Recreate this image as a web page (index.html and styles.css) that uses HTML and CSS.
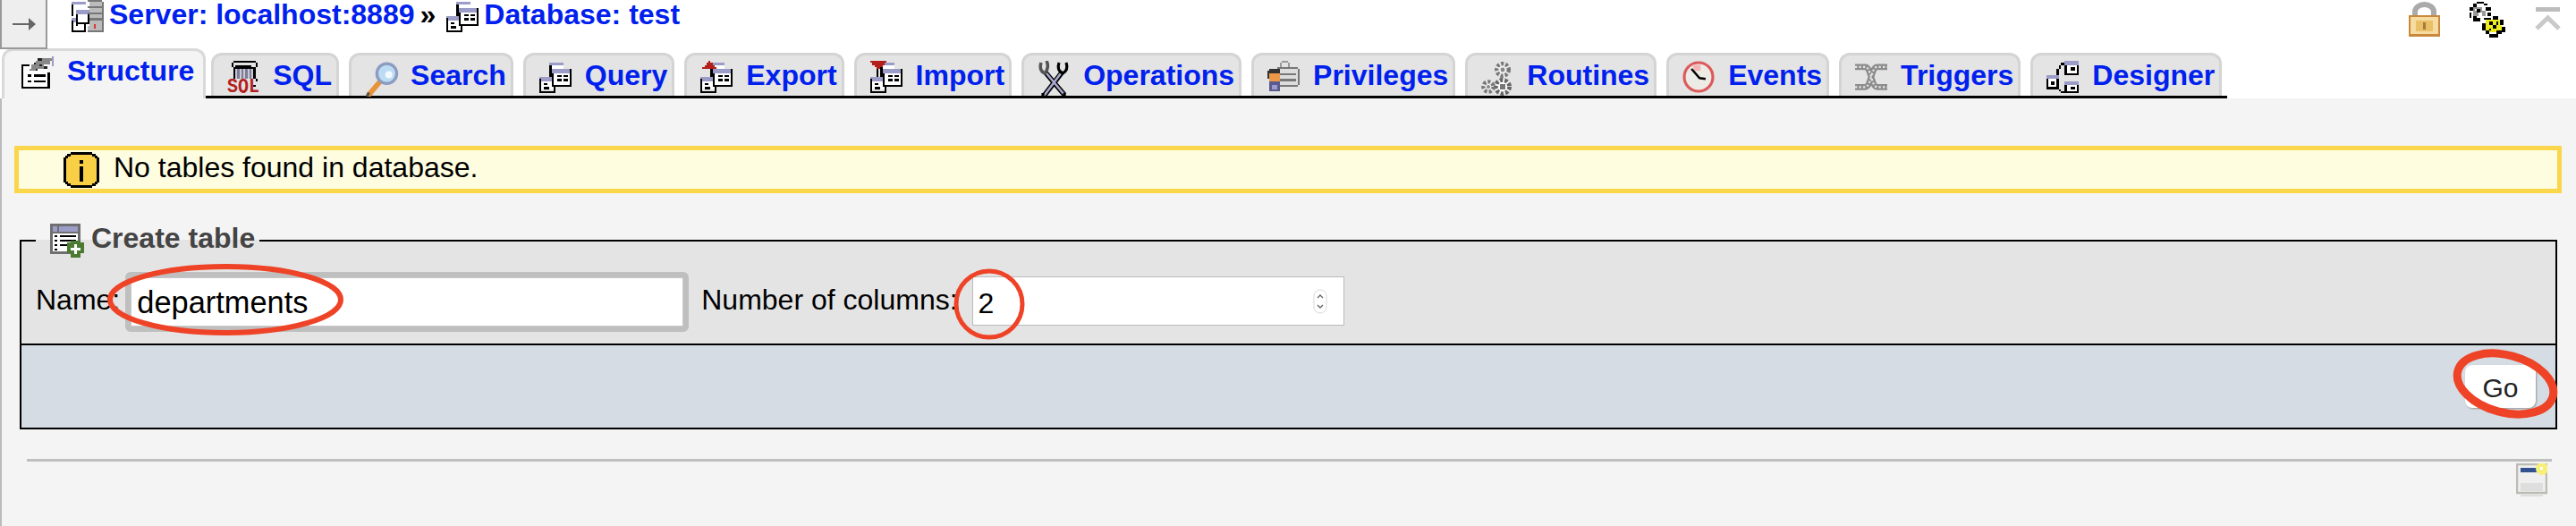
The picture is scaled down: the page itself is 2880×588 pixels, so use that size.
FILE: index.html
```html
<!DOCTYPE html>
<html lang="en">
<head>
	<meta charset="UTF-8">
	<title>localhost:8889 / test</title>
	<link rel="stylesheet" href="styles.css">
</head>
<body>
	<svg class="defs" width="0" height="0">
		<symbol id="i-sheets" viewBox="0 0 16 16" shape-rendering="crispEdges">
			<path fill="#9c9cc8" d="M5 1h7v1H5zM6 4h9v2H6zM0 8h6v2H0z"/>
			<path fill="#fff" d="M6 2h6v2H6zM7 6h8v6H7zM1 10h6v4H1z"/>
			<path fill="#000" d="M5 2h1v6H5zM6 6h1v7H6zM15 4h1v9h-1zM7 12h8v1H7zM9 7h2v1H9zM12 7h2v1h-2zM9 9h2v1H9zM12 9h2v1h-2zM0 9h1v7H0zM1 15h7v1H1zM7 13h1v2H7zM2 11h2v1H2zM2 13h3v1H2z"/>
		</symbol>
		<symbol id="i-server" viewBox="0 0 16 16" shape-rendering="crispEdges">
			<path fill="#9c9cc8" d="M0 1h7v1H0zM2 5h7v2H2zM0 9h3v2H0z"/>
			<path fill="#fff" d="M3 7h5v4H3zM1 11h6v4H1z"/>
			<path fill="#000" d="M0 2h1v6H0zM2 7h1v6H2zM8 7h1v5H8zM3 11h5v1H3zM0 10h1v6H0zM1 15h6v1H1zM6 12h1v4H6z"/>
			<path fill="#bbb" d="M9 1h6v2H9zM9 4h6v2H9zM9 7h6v2H9zM9 10h6v3H9zM8 13h7v2H8z"/>
			<path fill="#777" d="M8 0h7v1H8zM15 1h1v14h-1zM8 3h7v1H8zM8 6h7v1H8zM9 9h6v1H9zM8 15h8v1H8z"/>
			<path fill="#d33" d="M11 12h1v2h-1z"/>
		</symbol>
		<symbol id="i-structure" viewBox="0 0 16 16" shape-rendering="crispEdges">
			<path fill="#fff" d="M1 4h12v11H1z"/>
			<path fill="#000" d="M0 4h4v1H1v10h12V8h1v8H0zM3 9h2v1H3zM6 9h6v1H6zM3 12h2v1H3zM6 12h6v1H6z"/>
			<path fill="#888" d="M7 2h7v2H7zM5 4h6v2H5zM9 1h6v1H9zM4 6h4v1H4z"/>
			<path fill="#222" d="M8 1h2v1H8zM6 3h1v1H6zM9 4h1v1H9zM11 5h2v1h-2zM7 6h1v1H7z"/>
			<path fill="#9c9cc8" d="M15 0h1v5h-1z"/>
		</symbol>
		<symbol id="i-sql" viewBox="0 0 16 16" shape-rendering="crispEdges">
			<path fill="#000" d="M3 0h11v1H3zM2 1h1v2H2zM14 1h1v2h-1zM4 2h8v1H4zM3 3h11v1H3zM3 4h1v5H3zM13 4h1v5h-1zM14 9h1v1h-1zM13 12h1v1h-1z"/>
			<path fill="#c9c9d8" d="M4 4h9v5H4z"/>
			<path fill="#7d7d95" d="M5 4h1v5H5zM7 4h1v5H7zM9 4h1v5H9zM11 4h1v5h-1z"/>
		</symbol>
		<symbol id="i-search" viewBox="0 0 18 18">
			<path stroke="#e8923a" stroke-width="2.6" stroke-linecap="round" d="M2 17l6-7"/>
			<path stroke="#555" stroke-width="1.4" d="M1 18l1-2"/>
			<circle cx="11" cy="6.4" r="5" fill="#bcdcf4" stroke="#8c9cc0" stroke-width="1.5"/>
			<circle cx="12" cy="7" r="1.8" fill="#f2f8fd"/>
		</symbol>
		<symbol id="i-export" viewBox="0 0 16 16">
			<use href="#i-sheets"/>
			<path fill="#b3201c" shape-rendering="crispEdges" d="M4 0h1v1H4zM3 1h3v1H3zM2 2h5v1H2zM1 3h7v1H1z"/>
		</symbol>
		<symbol id="i-import" viewBox="0 0 16 16">
			<use href="#i-sheets"/>
			<path fill="#b3201c" shape-rendering="crispEdges" d="M0 0h8v1H0zM1 1h6v1H1zM2 2h4v1H2zM3 3h2v1H3z"/>
			<path fill="#000" shape-rendering="crispEdges" d="M3 4h1v4H3z"/>
		</symbol>
		<symbol id="i-ops" viewBox="0 0 20 20" fill="none">
			<path stroke="#000" stroke-width="2.8" d="M4 6l11 13M14 6L4 19"/>
			<path stroke="#a9a9cf" stroke-width="1.300" d="M5 7l10 12M13 7L4 19"/>
			<path stroke="#555" stroke-width="1.800" d="M2 1c-1 3 0 6 3 6M5 0c1 2 1 5-1 7"/>
			<path stroke="#000" stroke-width="1.600" d="M12 1c-1 3 0 5 2 6M16 1c1 3 0 5-2 6"/>
			<path stroke="#000" stroke-width="1.600" d="M3 20v-2M15 20v-2"/>
		</symbol>
		<symbol id="i-priv" viewBox="0 0 16 16" shape-rendering="crispEdges">
			<path fill="#999" d="M7 0h3v1H7zM6 1h1v3H6zM10 1h1v3h-1z"/>
			<path fill="#ddd" d="M5 4h10v8H5z"/>
			<path fill="#777" d="M5 3h10v1H5zM15 4h1v8h-1zM6 6h8v1H6zM6 9h8v1H6zM5 12h10v1H5z"/>
			<path fill="#333" d="M1 4h5v2H1zM0 5h1v4H0z"/>
			<path fill="#ec9a4a" d="M1 6h5v4H1z"/>
			<path fill="#5a5a90" d="M1 10h5v5H1z"/>
			<path fill="#9c9cc8" d="M2 12h3v2H2z"/>
		</symbol>
		<symbol id="i-routines" viewBox="0 0 20 20" fill="none">
			<circle cx="12" cy="5" r="3.400" fill="#eee" stroke="#777" stroke-width="2.200" stroke-dasharray="1.500 1"/>
			<circle cx="12" cy="5" r="1.200" fill="#888"/>
			<circle cx="12" cy="14.500" r="3.800" fill="#fff" stroke="#666" stroke-width="2.400" stroke-dasharray="1.700 1"/>
			<rect x="10.500" y="13" width="3" height="3" fill="#777"/>
			<circle cx="4" cy="14.500" r="2.800" fill="#eee" stroke="#777" stroke-width="2.200" stroke-dasharray="1.500 1"/>
			<circle cx="4" cy="14.500" r="1" fill="#888"/>
		</symbol>
		<symbol id="i-events" viewBox="0 0 16 16">
			<circle cx="8" cy="8" r="7.100" fill="#ecebe6" stroke="#dd5a5a" stroke-width="1.400"/>
			<path fill="#f3b5b5" d="M5 2h4v3H6z"/>
			<path fill="none" stroke="#000" stroke-width="1.100" d="M4.500 4l4 4.600 3 .4"/>
		</symbol>
		<symbol id="i-triggers" viewBox="0 0 16 16" fill="none">
			<path stroke="#8c8c8c" stroke-width="3" d="M0 3h5c3 0 3 10 6 10h5M0 13h5c3 0 3-10 6-10h5"/>
			<path stroke="#e6e6e6" stroke-width="1" stroke-dasharray="1 1" d="M0 3h5c3 0 3 10 6 10h5M0 13h5c3 0 3-10 6-10h5"/>
		</symbol>
		<symbol id="i-designer" viewBox="0 0 16 16" shape-rendering="crispEdges">
			<path fill="#9c9cc8" d="M9 0h7v2H9zM0 7h6v2H0zM9 10h7v2H9z"/>
			<path fill="#fff" d="M10 2h5v4h-5zM1 9h4v4H1zM10 12h5v3h-5z"/>
			<path fill="#000" d="M9 2h1v5H9zM15 2h1v5h-1zM10 6h5v1h-5zM12 3h2v2h-2zM0 9h1v5H0zM5 9h1v5H5zM1 13h4v1H1zM2 10h2v2H2zM9 12h1v4H9zM15 12h1v4h-1zM10 15h5v1h-5zM12 13h2v1h-2zM7 1h2v1H7zM6 2h1v2H6zM5 4h1v3H5zM6 14h1v1H6zM7 15h2v1H7z"/>
		</symbol>
		<symbol id="i-lock" viewBox="0 0 35 39">
			<path fill="none" stroke="#aaa" stroke-width="6" d="M7 16V11a10.500 8 0 0 1 21 0v5"/>
			<rect x="0" y="15" width="35" height="24" fill="#c9883c"/>
			<rect x="2" y="17" width="31" height="19" fill="#f6dca0"/>
			<rect x="8" y="21" width="19" height="12" fill="#e9bf68"/>
			<rect x="16" y="23" width="3" height="8" fill="#a87a3c"/>
		</symbol>
		<symbol id="i-settings" viewBox="0 0 20 20" shape-rendering="crispEdges">
			<path fill="#999" d="M2 3h7v5H2z"/>
			<path fill="#fff" d="M3 4h2v1H3zM7 3h2v2H7zM5 6h2v2H5z"/>
			<path fill="#000" d="M4 0h4v1H4zM2 1h2v2H2zM8 1h2v1H8zM0 3h2v2H0zM9 3h3v2H9zM0 6h1v3H0zM2 8h2v1H2zM4 4h2v2H4zM10 6h2v2h-2zM2 9h4v2H2z"/>
			<path fill="#ecec20" d="M9 10h9v7H9z"/>
			<path fill="#000" d="M8 9h4v1H8zM13 8h3v2h-3zM17 10h2v3h-2zM7 12h2v4H7zM18 14h2v3h-2zM9 16h2v2H9zM15 16h3v2h-3zM11 18h5v2h-5zM11 11h2v2h-2zM15 11h1v2h-1zM11 15h1v1h-1zM13 13h2v2h-2z"/>
		</symbol>
		<symbol id="i-collapse" viewBox="0 0 29 26">
			<path fill="#bdbdbd" d="M1 0h27v5H1z"/>
			<path fill="none" stroke="#c9c9c9" stroke-width="5" d="M2 24l12.500-12L27 24"/>
		</symbol>
		<symbol id="i-newtable" viewBox="0 0 38 38" shape-rendering="crispEdges">
			<path fill="#6f6f6f" d="M0 0h34v34H0z"/>
			<path fill="#9c9cc8" d="M3 3h5v6H3zM10 3h21v6H10z"/>
			<path fill="#fff" d="M3 11h28v20H3z"/>
			<path fill="#000" d="M5 13h3v2H5zM5 18h3v2H5zM5 23h3v2H5zM5 28h3v2H5zM11 13h18v2H11zM11 18h18v2H11zM11 23h11v2H11z"/>
			<path fill="#4c7a30" d="M23 19h11v2h4v12h-4v5H23v-5h-4V21h4z"/>
			<path fill="#fff" d="M27 23h3v4h4v3h-4v4h-3v-4h-4v-3h4z"/>
		</symbol>
		<symbol id="i-info" viewBox="0 0 40 40" shape-rendering="crispEdges">
			<path fill="#000" d="M8 0h24v2h4v2h2v2h2v28h-2v2h-2v2h-4v2H8v-2H4v-2H2v-2H0V6h2V4h2V2h4z"/>
			<path fill="#f9cf46" d="M8 3h24v2h3v2h2v26h-2v2h-3v2H8v-2H5v-2H3V7h2V5h3z"/>
			<path fill="#000" d="M18 9h4v4h-4zM18 16h4v17h-4z"/>
		</symbol>
		<symbol id="i-console" viewBox="0 0 35 37">
			<rect x="1" y="1" width="33" height="32" fill="#efefef" stroke="#bcbcb4" stroke-width="2.500"/>
			<rect x="5" y="5" width="25" height="5" fill="#31518f"/>
			<path fill="#dedede" d="M5 22h25v9H5z"/>
			<path fill="#ddd" d="M5 35h25v2H5z"/>
			<circle cx="29" cy="6" r="7" fill="#f6f07a"/>
			<rect x="27" y="4" width="3" height="3" fill="#fff"/>
		</symbol>
	</svg>

	<div class="topbar">
		<div class="toggle">
			<svg class="toggle-arrow" viewBox="0 0 26 14"><path fill="#666" d="M0 6h18V0l8 7-8 7V8H0z"/></svg>
		</div>
		<div class="crumbs">
			<svg class="ico"><use href="#i-server"/></svg>
			<a class="crumb">Server: localhost:8889</a>
			<span class="crumb-sep">»</span>
			<svg class="ico"><use href="#i-sheets"/></svg>
			<a class="crumb">Database: test</a>
		</div>
		<div class="top-icons">
			<svg class="lock"><use href="#i-lock"/></svg>
			<svg class="settings"><use href="#i-settings"/></svg>
			<svg class="collapse"><use href="#i-collapse"/></svg>
		</div>
	</div>

	<ul class="tabs">
		<li class="tab active"><svg class="ico"><use href="#i-structure"/></svg><a>Structure</a></li>
		<li class="tab">
			<svg class="ico" viewBox="0 0 16 16">
				<use href="#i-sql" width="16" height="16"/>
				<text class="sql-mark" x="0" y="15.400" textLength="16" lengthAdjust="spacingAndGlyphs">SQL</text>
			</svg>
			<a>SQL</a>
		</li>
		<li class="tab"><svg class="ico ico-big"><use href="#i-search"/></svg><a>Search</a></li>
		<li class="tab"><svg class="ico"><use href="#i-sheets"/></svg><a>Query</a></li>
		<li class="tab"><svg class="ico"><use href="#i-export"/></svg><a>Export</a></li>
		<li class="tab"><svg class="ico"><use href="#i-import"/></svg><a>Import</a></li>
		<li class="tab"><svg class="ico ico-big"><use href="#i-ops"/></svg><a>Operations</a></li>
		<li class="tab"><svg class="ico"><use href="#i-priv"/></svg><a>Privileges</a></li>
		<li class="tab"><svg class="ico ico-big"><use href="#i-routines"/></svg><a>Routines</a></li>
		<li class="tab"><svg class="ico"><use href="#i-events"/></svg><a>Events</a></li>
		<li class="tab"><svg class="ico"><use href="#i-triggers"/></svg><a>Triggers</a></li>
		<li class="tab"><svg class="ico"><use href="#i-designer"/></svg><a>Designer</a></li>
	</ul>

	<div class="main">
		<div class="notice">
			<svg class="notice-icon"><use href="#i-info"/></svg>
			<span class="notice-text">No tables found in database.</span>
		</div>

		<fieldset class="create">
			<legend class="create-title">
				<svg class="legend-icon"><use href="#i-newtable"/></svg>
				<span>Create table</span>
			</legend>
			<div class="create-row">
				<label class="create-label">Name:</label>
				<input class="name-input" type="text" value="departments">
				<label class="create-label cols-label">Number of columns:</label>
				<div class="cols-box">
					<input class="cols-input" type="text" value="2">
					<svg class="spinner" viewBox="0 0 16 28">
						<rect x="1" y="1" width="14" height="26" rx="7" fill="#fff" stroke="#d8d8d8"/>
						<path fill="none" stroke="#666" stroke-width="1.400" d="M5 10l3-3 3 3M5 18l3 3 3-3"/>
					</svg>
				</div>
			</div>
			<div class="create-foot">
				<button class="go-btn" type="button">Go</button>
			</div>
		</fieldset>

		<div class="rule"></div>
		<div class="console-row">
			<svg class="console"><use href="#i-console"/></svg>
		</div>
	</div>

	<!-- red marks drawn over the screenshot -->
	<svg class="marks" viewBox="0 0 2880 588">
		<ellipse cx="252" cy="335" rx="129" ry="37" stroke-width="6"/>
		<ellipse cx="1106" cy="340" rx="37" ry="37" stroke-width="5"/>
		<ellipse cx="2801" cy="429" rx="55" ry="32" stroke-width="9" transform="rotate(15 2801 429)"/>
	</svg>
</body>
</html>
```

FILE: styles.css
```css
*{
	margin: 0;
	padding: 0;
	box-sizing: border-box;
}
html,body{
	height: 100%;
}
body{
	position: relative;
	display: flex;
	flex-direction: column;
	overflow: hidden;
	background: #fff;
	font-family: "Liberation Sans", Arial, sans-serif;
	font-size: 32px;
	line-height: 32px;
	color: #000;
}
.defs{
	position: absolute;
}
.sql-mark{
	font-family: "Liberation Mono", monospace;
	font-size: 9.5px;
	font-weight: bold;
	fill: #b3201c;
}
.ico{
	width: 36px;
	height: 36px;
	flex: none;
}
.ico-big{
	width: 40px;
	height: 40px;
	margin-right: -4px;
}
a{
	color: #0020ee;
	font-weight: bold;
}

/* top bar */
.topbar{
	display: flex;
	height: 54px;
}
.toggle{
	width: 53px;
	height: 55px;
	display: flex;
	align-items: center;
	justify-content: center;
	background: #eee;
	border-right: 2px solid #999;
	border-bottom: 2px solid #999;
	border-left: 2px solid #999;
	z-index: 1;
}
.toggle-arrow{
	width: 26px;
	height: 14px;
}
.crumbs{
	display: flex;
	align-items: flex-start;
	margin-left: 27px;
}
.crumb{
	margin-left: 6px;
}
.crumb-sep{
	margin: 0 12px 0 6px;
	font-weight: bold;
}
.top-icons{
	display: flex;
	align-items: flex-start;
	margin-left: auto;
	padding: 2px 17px 0 0;
}
.lock{
	width: 35px;
	height: 39px;
}
.settings{
	width: 40px;
	height: 40px;
	margin-left: 33px;
}
.collapse{
	width: 29px;
	height: 26px;
	margin: 6px 0 0 33px;
}

/* tabs */
.tabs{
	display: flex;
	align-items: flex-end;
	gap: 11px;
	width: 2488px;
	height: 56px;
	margin-left: 2px;
	list-style: none;
	border-bottom: 3px solid #000;
}
.tab{
	display: flex;
	align-items: flex-start;
	gap: 15px;
	height: 48px;
	padding: 6px 5px 0 15px;
	background: #e4e4e4;
	border: 3px solid #d4d4d4;
	border-bottom: 0;
	border-radius: 12px 12px 0 0;
	white-space: nowrap;
}
.tab.active{
	height: 56px;
	margin: 0 -5px -3px 0;
	padding: 6px 10px 0 19px;
	background: #f4f4f4;
	border-color: #d9d9d9;
}

/* page body */
.main{
	flex: 1;
	display: flex;
	flex-direction: column;
	padding-top: 53px;
	background: #f4f4f4;
	border-left: 2px solid #bbb;
}
.notice{
	display: flex;
	align-items: center;
	gap: 16px;
	height: 53px;
	margin: 0 16px 0 14px;
	padding-left: 50px;
	background: #fefde0;
	border: 5px solid #f9d64a;
}
.notice-icon{
	width: 40px;
	height: 40px;
}
.notice-text{
	margin-bottom: 5px;
}

/* create table form */
.create{
	margin: 34px 21px 0 20px;
	background: #e4e4e4;
	border: 2px solid #000;
	min-width: 0;
}
.create-title{
	display: flex;
	align-items: flex-start;
	gap: 8px;
	height: 38px;
	margin-left: 16px;
	padding: 2px 5px 0 16px;
	font-weight: bold;
	line-height: 28px;
	color: #444;
}
.legend-icon{
	width: 38px;
	height: 38px;
	margin-top: -2px;
}
.create-row{
	display: flex;
	align-items: center;
	height: 96px;
	padding: 16px 0 13px 16px;
}
.create-label{
	padding-bottom: 5px;
	white-space: nowrap;
}
.name-input{
	width: 630px;
	height: 67px;
	margin-left: 6px;
	padding: 2px 0 0 7px;
	font: 34.400px "Liberation Sans", Arial, sans-serif;
	background: #fff;
	border: 6px solid #bfbfbf;
	border-radius: 6px;
	box-shadow: inset 0 0 0 1px #c8c8c8;
	outline: none;
}
.cols-label{
	margin-left: 14px;
}
.cols-box{
	display: flex;
	align-items: center;
	width: 416px;
	height: 55px;
	margin: 0 0 2px 16px;
	padding-right: 18px;
	background: #fff;
	border: 1px solid #bbb;
}
.cols-input{
	flex: 1;
	min-width: 0;
	height: 100%;
	padding: 5px 0 0 6px;
	font: 32px "Liberation Sans", Arial, sans-serif;
	background: none;
	border: 0;
	outline: none;
}
.spinner{
	width: 16px;
	height: 28px;
}
.create-foot{
	display: flex;
	justify-content: flex-end;
	align-items: center;
	height: 94px;
	padding-right: 22px;
	background: #d5dce3;
	border-top: 2px solid #000;
}
.go-btn{
	width: 79px;
	height: 48px;
	padding-top: 3px;
	font: 30px "Liberation Sans", Arial, sans-serif;
	color: #222;
	background: #fff;
	border: 0;
	border-radius: 8px;
	box-shadow: 1px 1px 2px #999;
}

/* bottom of the page */
.rule{
	height: 3px;
	margin: 33px 27px 0 28px;
	background: #bfbfbf;
}
.console-row{
	display: flex;
	justify-content: flex-end;
	padding: 2px 32px 0 0;
}
.console{
	width: 35px;
	height: 37px;
}

/* annotation layer */
.marks{
	position: absolute;
	top: 0;
	left: 0;
	width: 2880px;
	height: 588px;
	pointer-events: none;
}
.marks ellipse{
	fill: none;
	stroke: #ee4327;
}
```
